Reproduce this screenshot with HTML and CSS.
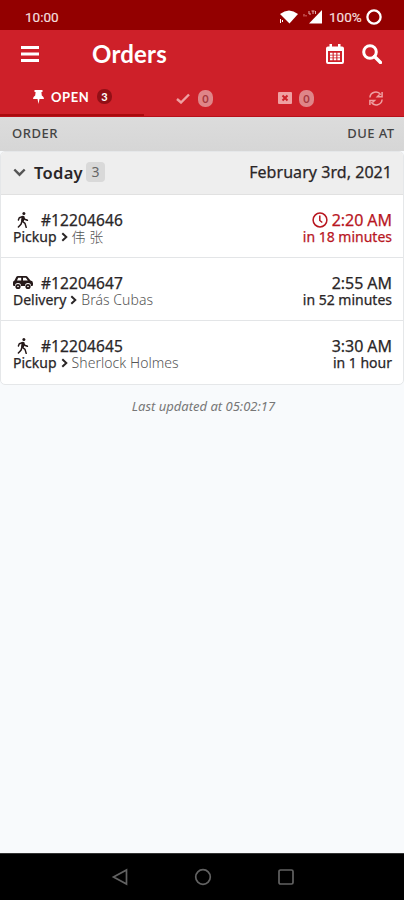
FILE: index.html
```html
<!DOCTYPE html>
<html lang="en">
<head>
<meta charset="utf-8">
<title>Orders</title>
<link rel="stylesheet" href="styles.css">
</head>
<body>
<svg class="defs" aria-hidden="true">
  <symbol id="walk" viewBox="0 0 12 16">
    <circle cx="6.9" cy="1.6" r="1.5"/>
    <path d="M6 4.6 5 9l3 2.4 1.2 4M5 9l-1 3.2-2.600 2.800M1.400 8l.9-2.300L6 4.500l1.800 2.800 2.600 1" fill="none" stroke="currentColor" stroke-width="1.500" stroke-linecap="round" stroke-linejoin="round"/>
    <path d="M4.700 4 7.500 4.200 7 9.500 4.200 9z"/>
  </symbol>
  <symbol id="car" viewBox="0 0 20 15">
    <path fill-rule="evenodd" d="M5 1h8q1 0 1.700.9L17.500 5.500q2.500.2 2.500 2.700V10q0 1-1 1h-1a3 3 0 0 0-6 0H8a3 3 0 0 0-6 0H1q-1 0-1-1V7.500Q0 6 1.500 5.500L3.200 2Q3.700 1 5 1zM5.200 2.700 4 5.500h4.200V2.700zM10 2.700v2.800h4.800l-2-2.800z"/>
    <circle cx="5" cy="11.500" r="2.600"/><circle cx="15" cy="11.500" r="2.600"/>
    <circle cx="5" cy="11.500" r=".8" fill="#fff"/><circle cx="15" cy="11.500" r=".8" fill="#fff"/>
  </symbol>
  <symbol id="chev" viewBox="0 0 7 10">
    <path d="M1.300 1.200 5.300 5l-4 3.800" fill="none" stroke="currentColor" stroke-width="2"/>
  </symbol>
</svg>
<div class="status">
  <span class="clock">10:00</span>
  <svg class="wifi" viewBox="0 0 18 14"><path d="M0 4Q9-3 18 4L9.500 13.500z"/><path d="M.5 9v4M2.500 10v2" stroke="#fff"/></svg>
  <svg class="signal" viewBox="0 0 20 14"><path d="M19 0v13.500H6z"/><path d="M1 4v2.500M3 5v1.500" stroke="#e08080"/><path d="M6 1v3h2M8.500 1h3M10 1v3M12.500 1v3" fill="none" stroke="#e5b0b0"/></svg>
  <span class="percent">100%</span>
  <svg class="battery" viewBox="0 0 16 16"><circle cx="8" cy="8" r="6.600" fill="none" stroke="#fff" stroke-width="2.300"/></svg>
</div>
<header class="bar">
  <svg class="menu" viewBox="0 0 18 16"><path d="M0 1.500h18M0 8h18M0 14.500h18" stroke="#fff" stroke-width="2.900"/></svg>
  <h1>Orders</h1>
  <svg class="calendar" viewBox="0 0 18 20"><path fill-rule="evenodd" d="M3.500 0H6v2.500h6V0h2.500v2.500H16q2 0 2 2V18q0 2-2 2H2q-2 0-2-2V4.500q0-2 2-2h1.500zM2 7v11h14V7z"/><path d="M4 9.700h10M4 12.500h10M4 15.200h10" stroke="#fff" stroke-width="1.900" stroke-dasharray="2.600 1.100"/></svg>
  <svg class="search" viewBox="0 0 20 20"><circle cx="8" cy="8" r="6.300" fill="none" stroke="#fff" stroke-width="3"/><path d="m12.500 12.500 6 6" stroke="#fff" stroke-width="3.400" stroke-linecap="round"/></svg>
</header>
<nav class="tabs">
  <div class="tab open">
    <svg class="pin" viewBox="0 0 11 14"><path d="M1.500 0h8v2H8.400l.4 3.500Q11 6.500 11 9H6.500L5.500 14 4.500 9H0q0-2.500 2.200-3.500L2.600 2H1.500z"/></svg>
    <span class="label">OPEN</span><span class="count dark">3</span>
  </div>
  <div class="tab done">
    <svg class="check" viewBox="0 0 14 11"><path d="m1 6 4 3.500L13 1.500" fill="none" stroke="currentColor" stroke-width="2.400"/></svg>
    <span class="count">0</span>
  </div>
  <div class="tab cancelled">
    <svg class="cross" viewBox="0 0 14 12"><path fill-rule="evenodd" d="M1 0h12q1 0 1 1v10q0 1-1 1H1q-1 0-1-1V1q0-1 1-1z"/><path d="m4.500 3.500 5 5m0-5-5 5" stroke="#ce2029" stroke-width="2"/></svg>
    <span class="count">0</span>
  </div>
  <div class="tab refresh">
    <svg class="sync" viewBox="0 0 16 16"><path d="M1.500 7A6.300 6.300 0 0 1 13 4M14.500 9A6.300 6.300 0 0 1 3 12M14.500 1v5h-5l2-2M1.500 15v-5h5l-2 2" fill="none" stroke="currentColor" stroke-width="1.600"/></svg>
  </div>
</nav>
<div class="columns"><span class="c1">ORDER</span><span class="c2">DUE AT</span></div>
<main>
  <section class="card">
    <div class="group">
      <svg class="down" viewBox="0 0 13 9"><path d="m1.300 1.500 5.200 5.200 5.200-5.200" fill="none" stroke="#555" stroke-width="2.400"/></svg>
      <span class="today">Today</span><span class="badge">3</span>
      <span class="date">February 3rd, 2021</span>
    </div>
    <article class="row">
      <div class="line"><svg class="kind walk"><use href="#walk"/></svg><span class="num">#12204646</span>
        <span class="time late"><svg class="due" viewBox="0 0 16 16"><circle cx="8" cy="8" r="6.900" fill="none" stroke="currentColor" stroke-width="1.500"/><path d="M7.800 3.500v5l2.500 2" fill="none" stroke="currentColor" stroke-width="1.500"/></svg>2:20 AM</span></div>
      <div class="line sub"><span class="type">Pickup</span><svg class="chev"><use href="#chev"/></svg><span class="name cjk">伟 张</span><span class="rel late">in 18 minutes</span></div>
    </article>
    <article class="row">
      <div class="line"><svg class="kind"><use href="#car"/></svg><span class="num">#12204647</span><span class="time">2:55 AM</span></div>
      <div class="line sub"><span class="type">Delivery</span><svg class="chev"><use href="#chev"/></svg><span class="name">Brás Cubas</span><span class="rel">in 52 minutes</span></div>
    </article>
    <article class="row">
      <div class="line"><svg class="kind walk"><use href="#walk"/></svg><span class="num">#12204645</span><span class="time">3:30 AM</span></div>
      <div class="line sub"><span class="type">Pickup</span><svg class="chev"><use href="#chev"/></svg><span class="name">Sherlock Holmes</span><span class="rel">in 1 hour</span></div>
    </article>
  </section>
  <p class="updated">Last updated at 05:02:17</p>
</main>
<footer class="system">
  <svg viewBox="0 0 18 18"><path d="M15.500 2v14L2.500 9z"/></svg>
  <svg viewBox="0 0 18 18"><circle cx="9" cy="9" r="7.300"/></svg>
  <svg viewBox="0 0 18 18"><rect x="2" y="2" width="14" height="14" rx="1.500"/></svg>
</footer>
</body>
</html>
```
FILE: styles.css
```css
* { box-sizing: border-box; }
body { margin: 0; width: 404px; height: 900px; overflow: hidden; display: flex; flex-direction: column; background: #f8fafc; color: #2a2627; font-family: "Noto Sans", "Noto Sans CJK SC", sans-serif; font-size: 15px; }
svg { display: block; flex: none; fill: currentColor; }
span { white-space: nowrap; }
.defs { display: none; }
.status { height: 30px; flex: none; background: #930000; color: #fff; display: flex; align-items: center; padding: 4px 22px 0 25px; font: 400 13.500px Roboto, sans-serif; }
.clock { margin-right: auto; color: #f3dede; -webkit-text-stroke: .2px; }
.wifi { width: 18px; height: 14px; margin-right: 5px; }
.signal { width: 20px; height: 14px; margin-right: 6px; }
.percent { width: 34px; margin-right: 3px; color: #f3dede; -webkit-text-stroke: .2px; }
.battery { width: 16px; height: 16px; }
.bar { height: 48px; flex: none; background: #ce2029; color: #fff; display: flex; align-items: center; padding: 0 22px 0 21px; }
.menu { width: 18px; height: 16px; }
h1 { margin: 0 auto 0 53px; font: 700 24px/30px Lato, sans-serif; letter-spacing: .2px; }
.calendar { width: 18px; height: 20px; margin-right: 18px; }
.search { width: 20px; height: 20px; }
.tabs { height: 39px; flex: none; background: #ce2029; color: #efa0a2; display: grid; grid-template-columns: 144px 102px 102px 56px; border-bottom: 1px solid #b9101a; }
.tab { display: flex; align-items: center; padding-top: 2px; }
.open { padding: 1px 0 0 33px; color: #fff; border-bottom: 2px solid #a90b0e; }
.pin { width: 11px; height: 14px; margin-right: 7px; }
.label { font: 700 13px Lato, sans-serif; letter-spacing: .6px; width: 40px; margin-right: 6px; }
.count { width: 15px; height: 17px; border-radius: 7px; background: #df8588; color: #a5383e; font: 700 11px/17px Lato, sans-serif; text-align: center; }
.dark { background: #930f16; color: #fff; height: 15px; line-height: 15px; }
.done { padding-left: 32px; }
.check { width: 14px; height: 11px; margin-right: 8px; }
.cancelled { padding-left: 32px; }
.cross { width: 14px; height: 12px; margin-right: 7px; }
.refresh { padding-left: 20px; }
.sync { width: 16px; height: 15px; }
.columns { height: 34px; flex: none; background: linear-gradient(#dcdcdc, #d6d6d6); display: flex; justify-content: space-between; align-items: center; padding: 0 10px 2px 12px; font-size: 13px; letter-spacing: .5px; font-weight: 500; color: #444; }
.c2 { letter-spacing: .4px; margin-right: -.4px; }
main { flex: 1; }
.card { border: 1px solid #e5e7e9; border-radius: 5px; background: #fff; overflow: hidden; height: 234px; }
.group { height: 43px; background: #eee; display: flex; align-items: center; padding: 0 11px 2px 12px; border-bottom: 1px solid #e1e1e1; }
.down { width: 13px; height: 9px; margin-right: 8px; }
.today { font-size: 16.500px; font-weight: 600; letter-spacing: .3px; width: 50px; margin-right: 2px; }
.badge { width: 19px; height: 20px; border-radius: 4px; background: #d9d9d9; color: #666; font-size: 14px; line-height: 20px; text-align: center; }
.date { margin-left: auto; font-size: 16px; font-weight: 400; letter-spacing: .05px; -webkit-text-stroke: .25px; }
.row { height: 63px; padding: 15px 11px 0 12px; border-bottom: 1px solid #e3e5e7; }
.row:last-child { border: 0; }
.line { display: flex; align-items: center; height: 19px; line-height: 18px; -webkit-text-stroke: .25px; }
.kind { width: 20px; height: 15px; margin-right: 8px; color: #241818; }
.walk { height: 16px; }
.num { font-size: 15.500px; letter-spacing: .1px; }
.time { margin-left: auto; display: flex; align-items: center; font-size: 16px; letter-spacing: -.05px; }
.due { width: 16px; height: 16px; margin-right: 4px; }
.sub { height: 15px; line-height: 15px; font-size: 14px; }
.chev { width: 7px; height: 10px; margin: 0 4px; }
.name { font-weight: 300; color: #555; letter-spacing: .05px; -webkit-text-stroke: 0; }
.cjk { font-size: 14px; }
.rel { margin-left: auto; }
.late { color: #b8161f; }
.updated { margin: 12px 0 0 3px; text-align: center; font-size: 13px; line-height: 18px; font-style: italic; color: #777; }
.system { height: 47px; flex: none; background: #000; display: flex; justify-content: center; align-items: center; gap: 65px; border-top: 1px solid #333; padding-left: 1px; }
.system svg { width: 18px; height: 18px; fill: none; stroke: #626262; stroke-width: 1.700; }
```
